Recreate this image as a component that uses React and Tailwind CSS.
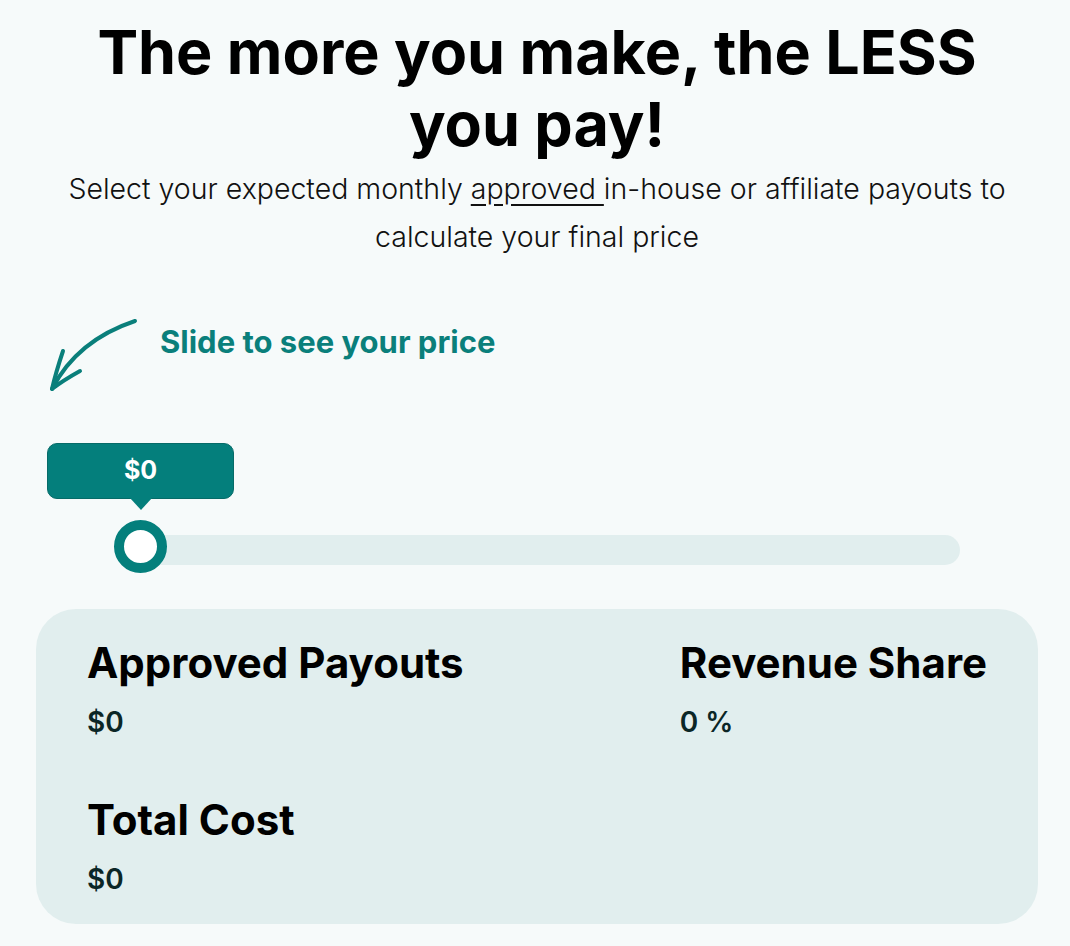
import React from 'react';

const Arrow = () => (
  <svg width="100" height="80" viewBox="0 0 100 80" fill="none" className="shrink-0">
    <path d="M87 3 C 60 12, 25 30, 4 71" stroke="#0a7f7b" strokeWidth="4" strokeLinecap="round" />
    <path d="M15 33 C 11 45, 7 58, 4 71 C 13 64, 23 58, 32 53" stroke="#0a7f7b" strokeWidth="4" strokeLinecap="round" strokeLinejoin="round" />
  </svg>
);

const Stat = ({ label, value, className = '' }) => (
  <div className={className}>
    <h3 className="text-[42px] leading-[50px] font-bold text-black">{label}</h3>
    <p className="mt-[17px] text-[28px] leading-[34px] font-semibold text-[#0b2626]">{value}</p>
  </div>
);

export default function App() {
  return (
    <div className="min-h-[946px] w-full bg-[#f6fafa] font-['Inter',sans-serif]">
      <div className="ml-[36px] w-[1002px] pt-[16px]">
        <h1 className="text-center text-[61px] leading-[72px] font-bold text-black">
          The more you make, the LESS
          <br />
          you pay!
        </h1>
        <p className="mt-[5px] text-center text-[28.5px] leading-[48px] font-light text-[#111]">
          Select your expected monthly <span className="underline underline-offset-[5px]">approved </span>in-house or affiliate payouts to
          <br />
          calculate your final price
        </p>

        <div className="mt-[57px] flex items-start gap-[12px] pl-[12px]">
          <Arrow />
          <span className="mt-[6px] text-[31px] leading-[36px] font-bold text-[#0a7f7b]">Slide to see your price</span>
        </div>

        <div className="relative mt-[45px] h-[130px]">
          <div className="absolute left-[11px] top-0 flex h-[56px] w-[187px] items-center justify-center rounded-[10px] border border-[#066b68] bg-[#047f7c]">
            <span className="text-[25px] font-bold text-white">$0</span>
            <span className="absolute left-[82px] top-[54px] h-0 w-0 border-x-[11px] border-t-[12px] border-x-transparent border-t-[#047f7c]" />
          </div>
          <div className="absolute left-[80px] right-[78px] top-[92px] h-[30px] rounded-full bg-[#e1eeee]" />
          <div className="absolute left-[78px] top-[77px] h-[53px] w-[53px] rounded-full border-[10px] border-[#047f7c] bg-white" />
        </div>

        <div className="mt-[36px] rounded-[40px] bg-[#e1eeee] px-[51px] pt-[29px] pb-[28px]">
          <div className="flex justify-between">
            <Stat label="Approved Payouts" value="$0" />
            <Stat label="Revenue Share" value="0 %" />
          </div>
          <Stat className="mt-[56px]" label="Total Cost" value="$0" />
        </div>
      </div>
    </div>
  );
}
